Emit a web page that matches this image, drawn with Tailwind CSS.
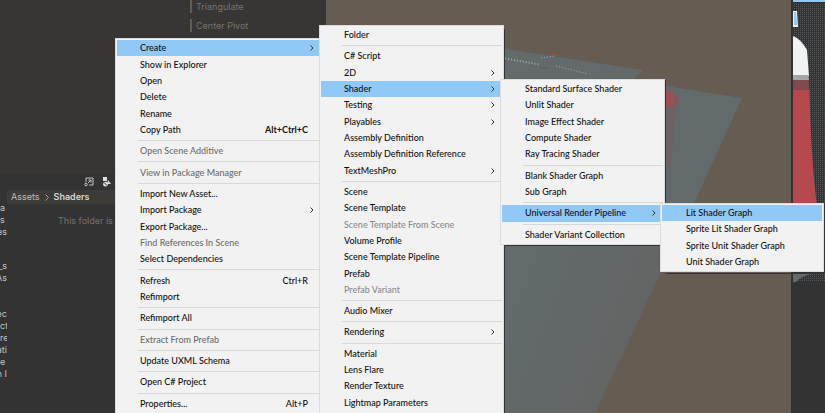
<!DOCTYPE html>
<html lang="en">
<head>
<meta charset="utf-8">
<title>Shaders</title>
<script src="https://cdn.jsdelivr.net/npm/@tailwindcss/browser@4"></script>
</head>
<body class="relative h-screen overflow-hidden bg-[#333333] font-[Lato,sans-serif] text-[#111111]">

<div class="flex h-full">
  <!-- Editor side panel -->
  <aside class="flex w-[326px] shrink-0 flex-col font-[Inter,sans-serif]">
    <div class="flex h-[174px] flex-col gap-[6px] bg-[#373635] pl-[190px] text-[9px] leading-[13px] text-[#77736e]">
      <button class="border-l-2 border-[#655c52] pl-1 text-left">Triangulate</button>
      <button class="border-l-2 border-[#655c52] pl-1 text-left">Center Pivot</button>
    </div>
    <div class="flex flex-1">
      <div class="flex w-[7px] flex-col overflow-hidden whitespace-nowrap pt-[28px] text-[9px] leading-[12px] text-[#c4c4c4]">
        <span>a</span><span>s</span><span class="self-end">es</span>
        <span class="mt-[22px] self-end">_s</span><span class="self-end">As</span>
        <span class="mt-[24px] self-end">ec</span><span>cte</span><span>re</span><span class="self-end">ati</span><span>e</span><span class="self-end">n I</span>
      </div>
      <section class="flex-1">
        <div class="flex h-[16px] items-center gap-[8px] pl-[77px]">
          <button aria-label="Open search window">
            <svg width="10" height="10" viewBox="0 0 10 10" fill="none" stroke="#c4c4c4"><path d="M2 5V1h7v7H5M4 6l3-3M4.500 3H7v2.500"/><circle cx="2" cy="7.500" r="1.300"/></svg>
          </button>
          <button aria-label="Filter by type">
            <svg width="10" height="10" viewBox="0 0 10 10" fill="#dedede"><path d="M1 0h4v4H1zM6 3l3 4H5z"/><circle cx="3.500" cy="7.200" r="2.400"/><path d="M2 5.500l3 3" stroke="#333"/></svg>
          </button>
        </div>
        <nav class="flex h-[14px] items-center gap-[5px] bg-[#3d3b38] pl-[4px] text-[9px] text-[#bdbdbd]">
          <a href="#">Assets</a>
          <svg width="4" height="7" viewBox="0 0 4 7" fill="none" stroke="#a0a0a0"><path d="M.5.5l3 3-3 3"/></svg>
          <a href="#" class="font-semibold text-[#d6d6d6]">Shaders</a>
        </nav>
        <p class="pt-[10px] pl-[51px] text-[9px] leading-[14px] text-[#77716b]">This folder is empty</p>
      </section>
    </div>
  </aside>

  <!-- Scene view -->
  <div class="min-w-0 flex-1 overflow-hidden bg-[#655c52]">
    <svg width="465" height="413" viewBox="326 0 465 413" aria-hidden="true">
      <defs>
        <linearGradient id="g" x1="0" y1="0" x2="1" y2=".4"><stop offset=".2" stop-color="#626a6b"/><stop offset="1" stop-color="#636463"/></linearGradient>
      </defs>
      <path fill="#626a6b" d="M500 48l143 22-10 10H500z"/>
      <path fill="#626a6b" d="M660 85l82 13-50 110h-32z"/>
      <path fill="url(#g)" d="M500 240h173l-12 32-66 141h-95z"/>
      <path fill="none" stroke="#aab0b0" stroke-dasharray="1 2" d="M505 58l35 6M505 59l35 6M541 58l14-2M556 66l32 8"/>
      <path fill="none" stroke="#b5494e" d="M549 54.500l10 1"/>
      <path fill="none" stroke="#655c52" d="M540 67.500l10 1"/>
      <path fill="#9c5053" d="M666 90l7 2v14l-7 2z"/>
      <path fill="#82585b" d="M673 95l7 0-4 13h-9v-2l6-2z"/>
      <path fill="#6f6062" d="M667 108l9 0-5 56-4 5z"/>
      <path fill="none" stroke="#333" d="M504.500 29v50M504.500 413V245.500H661M665.500 80v123M666 273.500h125"/>
    </svg>
  </div>

  <!-- Neighbouring view -->
  <div class="w-[34px] shrink-0 bg-[#333333]">
    <svg width="34" height="282" viewBox="791 0 34 282" aria-hidden="true">
      <defs><pattern id="d" width="2" height="2" patternUnits="userSpaceOnUse"><path fill="#333" d="M0 0h2v2H0z"/><path fill="#545a5b" d="M0 0h1v1H0z"/></pattern></defs>
      <path fill="url(#d)" d="M793 3h32v200h-32z"/>
      <path fill="#90c8f6" d="M793 0h32v2h-32z"/>
      <path fill="#f2f2f2" d="M793 11h4l1 16h-5z"/><path fill="#90c8f6" d="M794 12h2l1 13h-3z"/>
      <path fill="#f2f2f2" d="M793 36q8 3 14 14l2 26h-16z"/>
      <path fill="#a5a5a5" d="M793 75h15.500l.5 5h-16z"/>
      <path fill="#82494c" d="M793 80h16l.5 11H793z"/>
      <path fill="#b5494e" d="M793 90h16.500q1 60 7 113H793z"/>
      <path fill="#626a6b" d="M793 274h32v8h-32z"/>
      <path fill="url(#d)" d="M796 282q8-8 18-8h11v8z"/>
    </svg>
  </div>
</div>

<svg class="hidden"><symbol id="chev" viewBox="0 0 4 6"><path d="M.5.5L3 3 .5 5.500" fill="none" stroke="#333" stroke-width="1"/></symbol></svg>

<!-- Assets menu -->
<div role="menu" class="absolute top-[38px] bottom-0 left-[115px] flex w-[205px] flex-col border border-b-0 border-[#dcdcdc] bg-[#f2f2f2] py-px pl-px text-[9px] leading-[12px] font-medium whitespace-nowrap">
  <button role="menuitem" class="flex flex-1 items-center justify-between bg-[#90c8f6] pr-[5px] pl-[23px]">Create<svg class="h-[6px] w-[4px]"><use href="#chev"/></svg></button>
  <button role="menuitem" class="flex flex-1 items-center pl-[23px]">Show in Explorer</button>
  <button role="menuitem" class="flex flex-1 items-center pl-[23px]">Open</button>
  <button role="menuitem" class="flex flex-1 items-center pl-[23px]">Delete</button>
  <button role="menuitem" class="flex flex-1 items-center pl-[23px]">Rename</button>
  <button role="menuitem" class="flex flex-1 items-center justify-between pr-[11px] pl-[23px]">Copy Path<kbd class="font-[Lato,sans-serif] font-bold">Alt+Ctrl+C</kbd></button>
  <hr class="my-[2px] ml-[21px] border-[#d8d8d8]">
  <button role="menuitem" disabled class="flex flex-1 items-center pl-[23px] text-[#6d6d6d]">Open Scene Additive</button>
  <hr class="my-[2px] ml-[21px] border-[#d8d8d8]">
  <button role="menuitem" disabled class="flex flex-1 items-center pl-[23px] text-[#6d6d6d]">View in Package Manager</button>
  <hr class="my-[2px] ml-[21px] border-[#d8d8d8]">
  <button role="menuitem" class="flex flex-1 items-center pl-[23px]">Import New Asset...</button>
  <button role="menuitem" class="flex flex-1 items-center justify-between pr-[5px] pl-[23px]">Import Package<svg class="h-[6px] w-[4px]"><use href="#chev"/></svg></button>
  <button role="menuitem" class="flex flex-1 items-center pl-[23px]">Export Package...</button>
  <button role="menuitem" disabled class="flex flex-1 items-center pl-[23px] text-[#6d6d6d]">Find References In Scene</button>
  <button role="menuitem" class="flex flex-1 items-center pl-[23px]">Select Dependencies</button>
  <hr class="my-[2px] ml-[21px] border-[#d8d8d8]">
  <button role="menuitem" class="flex flex-1 items-center justify-between pr-[11px] pl-[23px]">Refresh<kbd class="font-[Lato,sans-serif]">Ctrl+R</kbd></button>
  <button role="menuitem" class="flex flex-1 items-center pl-[23px]">Refimport</button>
  <hr class="my-[2px] ml-[21px] border-[#d8d8d8]">
  <button role="menuitem" class="flex flex-1 items-center pl-[23px]">Refimport All</button>
  <hr class="my-[2px] ml-[21px] border-[#d8d8d8]">
  <button role="menuitem" disabled class="flex flex-1 items-center pl-[23px] text-[#6d6d6d]">Extract From Prefab</button>
  <hr class="my-[2px] ml-[21px] border-[#d8d8d8]">
  <button role="menuitem" class="flex flex-1 items-center pl-[23px]">Update UXML Schema</button>
  <hr class="my-[2px] ml-[21px] border-[#d8d8d8]">
  <button role="menuitem" class="flex flex-1 items-center pl-[23px]">Open C# Project</button>
  <hr class="my-[2px] ml-[21px] border-[#d8d8d8]">
  <button role="menuitem" class="flex flex-1 items-center justify-between pr-[11px] pl-[23px]">Properties...<kbd class="font-[Lato,sans-serif]">Alt+P</kbd></button>
</div>

<!-- Create submenu -->
<div role="menu" class="absolute top-[25px] bottom-0 left-[319px] flex w-[185px] flex-col border border-b-0 border-[#dcdcdc] bg-[#f2f2f2] px-px pt-px pb-[2px] text-[9px] leading-[12px] font-medium whitespace-nowrap">
  <button role="menuitem" class="flex flex-1 items-center pl-[23px]">Folder</button>
  <hr class="my-[2px] ml-[21px] border-[#d8d8d8]">
  <button role="menuitem" class="flex flex-1 items-center pl-[23px]">C# Script</button>
  <button role="menuitem" class="flex flex-1 items-center justify-between pr-[7px] pl-[23px]">2D<svg class="h-[6px] w-[4px]"><use href="#chev"/></svg></button>
  <button role="menuitem" class="flex flex-1 items-center justify-between bg-[#90c8f6] pr-[7px] pl-[23px]">Shader<svg class="h-[6px] w-[4px]"><use href="#chev"/></svg></button>
  <button role="menuitem" class="flex flex-1 items-center justify-between pr-[7px] pl-[23px]">Testing<svg class="h-[6px] w-[4px]"><use href="#chev"/></svg></button>
  <button role="menuitem" class="flex flex-1 items-center justify-between pr-[7px] pl-[23px]">Playables<svg class="h-[6px] w-[4px]"><use href="#chev"/></svg></button>
  <button role="menuitem" class="flex flex-1 items-center pl-[23px]">Assembly Definition</button>
  <button role="menuitem" class="flex flex-1 items-center pl-[23px]">Assembly Definition Reference</button>
  <button role="menuitem" class="flex flex-1 items-center justify-between pr-[7px] pl-[23px]">TextMeshPro<svg class="h-[6px] w-[4px]"><use href="#chev"/></svg></button>
  <hr class="my-[2px] ml-[21px] border-[#d8d8d8]">
  <button role="menuitem" class="flex flex-1 items-center pl-[23px]">Scene</button>
  <button role="menuitem" class="flex flex-1 items-center pl-[23px]">Scene Template</button>
  <button role="menuitem" disabled class="flex flex-1 items-center pl-[23px] text-[#8a8a8a]">Scene Template From Scene</button>
  <button role="menuitem" class="flex flex-1 items-center pl-[23px]">Volume Profile</button>
  <button role="menuitem" class="flex flex-1 items-center pl-[23px]">Scene Template Pipeline</button>
  <button role="menuitem" class="flex flex-1 items-center pl-[23px]">Prefab</button>
  <button role="menuitem" disabled class="flex flex-1 items-center pl-[23px] text-[#8a8a8a]">Prefab Variant</button>
  <hr class="my-[2px] ml-[21px] border-[#d8d8d8]">
  <button role="menuitem" class="flex flex-1 items-center pl-[23px]">Audio Mixer</button>
  <hr class="my-[2px] ml-[21px] border-[#d8d8d8]">
  <button role="menuitem" class="flex flex-1 items-center justify-between pr-[7px] pl-[23px]">Rendering<svg class="h-[6px] w-[4px]"><use href="#chev"/></svg></button>
  <hr class="my-[2px] ml-[21px] border-[#d8d8d8]">
  <button role="menuitem" class="flex flex-1 items-center pl-[23px]">Material</button>
  <button role="menuitem" class="flex flex-1 items-center pl-[23px]">Lens Flare</button>
  <button role="menuitem" class="flex flex-1 items-center pl-[23px]">Render Texture</button>
  <button role="menuitem" class="flex flex-1 items-center pl-[23px]">Lightmap Parameters</button>
</div>

<!-- Shader submenu -->
<div role="menu" class="absolute top-[79px] left-[500px] flex h-[166px] w-[165px] flex-col border border-[#dcdcdc] bg-[#f2f2f2] p-px text-[9px] leading-[12px] font-medium whitespace-nowrap">
  <button role="menuitem" class="flex flex-1 items-center pl-[23px]">Standard Surface Shader</button>
  <button role="menuitem" class="flex flex-1 items-center pl-[23px]">Unlit Shader</button>
  <button role="menuitem" class="flex flex-1 items-center pl-[23px]">Image Effect Shader</button>
  <button role="menuitem" class="flex flex-1 items-center pl-[23px]">Compute Shader</button>
  <button role="menuitem" class="flex flex-1 items-center pl-[23px]">Ray Tracing Shader</button>
  <hr class="my-[2px] ml-[21px] border-[#d8d8d8]">
  <button role="menuitem" class="flex flex-1 items-center pl-[23px]">Blank Shader Graph</button>
  <button role="menuitem" class="flex flex-1 items-center pl-[23px]">Sub Graph</button>
  <hr class="my-[2px] ml-[21px] border-[#d8d8d8]">
  <button role="menuitem" class="flex flex-1 items-center justify-between bg-[#90c8f6] pr-[7px] pl-[23px]">Universal Render Pipeline<svg class="h-[6px] w-[4px]"><use href="#chev"/></svg></button>
  <hr class="my-[2px] ml-[21px] border-[#d8d8d8]">
  <button role="menuitem" class="flex flex-1 items-center pl-[23px]">Shader Variant Collection</button>
</div>

<!-- Universal Render Pipeline submenu -->
<div role="menu" class="absolute top-[203px] left-[660px] flex h-[69px] w-[164px] flex-col border border-[#dcdcdc] bg-[#f2f2f2] p-px text-[9px] leading-[12px] font-medium whitespace-nowrap">
  <button role="menuitem" class="flex flex-1 items-center bg-[#90c8f6] pl-[24px]">Lit Shader Graph</button>
  <button role="menuitem" class="flex flex-1 items-center pl-[24px]">Sprite Lit Shader Graph</button>
  <button role="menuitem" class="flex flex-1 items-center pl-[24px]">Sprite Unit Shader Graph</button>
  <button role="menuitem" class="flex flex-1 items-center pl-[24px]">Unit Shader Graph</button>
</div>
</body>
</html>
